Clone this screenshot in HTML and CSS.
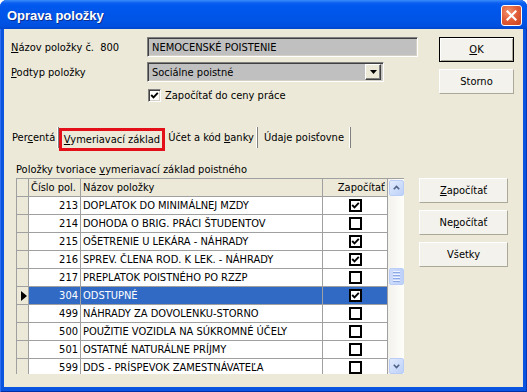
FILE: index.html
```html
<!DOCTYPE html>
<html lang="sk">
<head>
<meta charset="utf-8">
<title>Oprava položky</title>
<link rel="stylesheet" href="styles.css">
</head>
<body>
<div class="window">
  <div class="titlebar">
    <span class="title">Oprava položky</span>
    <span class="close"><svg width="11" height="11" viewBox="0 0 11 11"><path d="M1.5 1.5 L9.5 9.5 M9.5 1.5 L1.5 9.5" stroke="#fff" stroke-width="2.2" stroke-linecap="square"/></svg></span>
  </div>
  <div class="body">
    <div class="top">
      <div class="form">
        <div class="row">
          <span class="lbl"><u>N</u>ázov položky č.&nbsp; 800</span>
          <div class="field name">NEMOCENSKÉ POISTENIE</div>
        </div>
        <div class="row">
          <span class="lbl"><u>P</u>odtyp položky</span>
          <div class="field combo"><span class="ctext">Sociálne poistné</span><span class="dd"><svg width="7" height="4" viewBox="0 0 7 4"><path d="M0 0 H7 L3.5 4 Z" fill="#000"/></svg></span></div>
        </div>
        <div class="chkrow">
          <span class="chk"><svg width="9" height="9" viewBox="0 0 9 9"><polyline points="1.2,4 3.5,6.3 7.8,1.8" fill="none" stroke="#000" stroke-width="1.9"/></svg></span>
          <span class="chklbl">Započítať do ceny práce</span>
        </div>
      </div>
      <div class="btns">
        <div class="btn default"><span><u>O</u>K</span></div>
        <div class="btn"><span>Storno</span></div>
      </div>
    </div>
    <div class="tabs">
      <div class="tab t1"><span>Per<u>c</u>entá</span></div>
      <div class="tab t2 active"><span><u>V</u>ymeriavací základ</span></div>
      <div class="tab t3"><span>Účet a kód <u>b</u>anky</span></div>
      <div class="tab t4"><span>Údaje poisťovne</span></div>
    </div>
    <div class="panel">
      <div class="left">
        <div class="caption">Položky tvoriace <u>v</u>ymeriavací základ poistného</div>
        <div class="grid">
          <div class="rows">
            <div class="r head"><span class="sel"></span><span class="num">Číslo pol.</span><span class="nm">Názov položky</span><span class="ck hk">Započítať</span></div>
            <div class="r"><span class="sel"></span><span class="num">213</span><span class="nm">DOPLATOK DO MINIMÁLNEJ MZDY</span><span class="ck"><i class="box on"></i></span></div>
            <div class="r"><span class="sel"></span><span class="num">214</span><span class="nm">DOHODA O BRIG. PRÁCI ŠTUDENTOV</span><span class="ck"><i class="box"></i></span></div>
            <div class="r"><span class="sel"></span><span class="num">215</span><span class="nm">OŠETRENIE U LEKÁRA - NÁHRADY</span><span class="ck"><i class="box on"></i></span></div>
            <div class="r"><span class="sel"></span><span class="num">216</span><span class="nm">SPREV. ČLENA ROD. K LEK. - NÁHRADY</span><span class="ck"><i class="box on"></i></span></div>
            <div class="r"><span class="sel"></span><span class="num">217</span><span class="nm">PREPLATOK POISTNÉHO PO RZZP</span><span class="ck"><i class="box"></i></span></div>
            <div class="r current"><span class="sel"><svg width="6" height="10" viewBox="0 0 6 10"><path d="M0 0 L6 5 L0 10 Z" fill="#000"/></svg></span><span class="num">304</span><span class="nm">ODSTUPNÉ</span><span class="ck"><i class="box on"></i></span></div>
            <div class="r"><span class="sel"></span><span class="num">499</span><span class="nm">NÁHRADY ZA DOVOLENKU-STORNO</span><span class="ck"><i class="box"></i></span></div>
            <div class="r"><span class="sel"></span><span class="num">500</span><span class="nm">POUŽITIE VOZIDLA NA SÚKROMNÉ ÚČELY</span><span class="ck"><i class="box"></i></span></div>
            <div class="r"><span class="sel"></span><span class="num">501</span><span class="nm">OSTATNÉ NATURÁLNE PRÍJMY</span><span class="ck"><i class="box"></i></span></div>
            <div class="r"><span class="sel"></span><span class="num">599</span><span class="nm">DDS - PRÍSPEVOK ZAMESTNÁVATEĽA</span><span class="ck"><i class="box"></i></span></div>
          </div>
          <div class="sb">
            <div class="sbtn"><svg width="7" height="5" viewBox="0 0 7 5"><polyline points="0.8,4.2 3.5,1.5 6.2,4.2" fill="none" stroke="#4d6185" stroke-width="1.6"/></svg></div>
            <div class="track">
              <div class="thumb"><span></span><span></span><span></span><span></span></div>
            </div>
            <div class="sbtn"><svg width="7" height="5" viewBox="0 0 7 5"><polyline points="0.8,0.8 3.5,3.5 6.2,0.8" fill="none" stroke="#4d6185" stroke-width="1.6"/></svg></div>
          </div>
        </div>
      </div>
      <div class="rbtns">
        <div class="btn wide"><span><u>Z</u>apočítať</span></div>
        <div class="btn wide"><span>Ne<u>p</u>očítať</span></div>
        <div class="btn wide"><span>Všetky</span></div>
      </div>
    </div>
  </div>
</div>
</body>
</html>
```

FILE: styles.css
```css
* { box-sizing: border-box; }
html, body { margin: 0; padding: 0; }
body {
  width: 527px;
  height: 392px;
  overflow: hidden;
  background: #fff;
  font-family: "DejaVu Sans", "Liberation Sans", sans-serif;
  font-stretch: condensed;
  font-size: 11px;
  color: #000;
}
u { text-decoration: underline; text-underline-offset: 1px; }

.window {
  width: 527px;
  height: 392px;
  display: flex;
  flex-direction: column;
  background: #0a55e0;
  border-radius: 7px 7px 0 0;
  padding: 0 4px 5px 4px;
  box-shadow: inset 1px 0 #2d6ff0, inset -1px 0 #0339b8, inset 0 -1px #0030a8;
}

.titlebar {
  height: 29px;
  margin: 0 -4px;
  padding: 0 5px 0 7px;
  display: flex;
  align-items: center;
  justify-content: space-between;
  border-radius: 7px 7px 0 0;
  background: linear-gradient(#3b8cf8 0, #0a5ff0 3px, #0058ee 6px, #0054e6 20px, #0050e0 26px, #0046cc 29px);
}
.title {
  color: #fff;
  font-family: "Liberation Sans", sans-serif;
  font-stretch: normal;
  font-weight: bold;
  font-size: 13px;
  text-shadow: 1px 1px #0b2f8e;
  padding-top: 1px;
}
.close {
  width: 21px;
  height: 21px;
  border: 1px solid #fff;
  border-radius: 3px;
  background: radial-gradient(circle at 35% 30%, #f2926e 0, #e2603a 45%, #c9401c 100%);
  display: flex;
  align-items: center;
  justify-content: center;
  margin-top: 2px;
}

.body {
  flex: 1;
  background: #ece9d8;
  display: flex;
  flex-direction: column;
  padding: 8px 9px 0 7px;
}

.top {
  height: 90px;
  display: flex;
  justify-content: space-between;
}
.row {
  display: flex;
  align-items: center;
  height: 20px;
  margin-bottom: 5px;
}
.lbl { width: 136px; white-space: nowrap; }
.field {
  height: 20px;
  background: #c0c0c0;
  border: 1px solid;
  border-color: #808080 #fff #fff #808080;
  box-shadow: inset 1px 1px #404040, inset -1px -1px #d4d0c8;
  display: flex;
  align-items: center;
  padding-left: 4px;
  white-space: nowrap;
}
.name { width: 271px; }
.combo { width: 237px; justify-content: space-between; padding-right: 2px; }
.dd {
  width: 16px;
  height: 16px;
  background: #ece9d8;
  border: 1px solid;
  border-color: #fff #404040 #404040 #fff;
  box-shadow: inset -1px -1px #808080;
  display: flex;
  align-items: center;
  justify-content: center;
}
.chkrow {
  display: flex;
  align-items: center;
  margin-top: 6px;
  padding-left: 137px;
  height: 14px;
}
.chk {
  width: 13px;
  height: 13px;
  background: #fff;
  border: 1px solid;
  border-color: #808080 #fff #fff #808080;
  box-shadow: inset 1px 1px #404040, inset -1px -1px #d4d0c8;
  display: flex;
  align-items: center;
  justify-content: center;
}
.chklbl { margin-left: 4px; }

.btns {
  display: flex;
  flex-direction: column;
  gap: 7px;
}
.btn {
  width: 75px;
  height: 25px;
  background: #f3f2ec;
  border: 1px solid;
  border-color: #fff #aca899 #aca899 #fff;
  display: flex;
  align-items: center;
  justify-content: center;
  white-space: nowrap;
}
.btn.default {
  border: 1px solid #000;
  box-shadow: inset 1px 1px #fff, inset -1px -1px #aca899;
}
.btn.wide { width: 89px; }

.tabs {
  display: flex;
  height: 21px;
  align-items: flex-start;
}
.tab {
  height: 21px;
  display: flex;
  align-items: center;
  justify-content: center;
  white-space: nowrap;
  border-right: 1px solid #808080;
  box-shadow: inset -1px 0 #fff;
}
.t1 { width: 48px; justify-content: flex-start; padding-left: 1px; }
.t2 {
  width: 106px;
  height: 23px;
  margin-top: 1px;
  border: 3px solid #e3101a;
  box-shadow: none;
  margin-bottom: -3px;
}
.t3 { width: 93px; }
.t4 { width: 93px; }

.panel {
  display: flex;
  padding: 14px 0 0 5px;
}
.caption {
  height: 16px;
  line-height: 16px;
  white-space: nowrap;
}
.grid {
  width: 388px;
  height: 196px;
  display: flex;
  overflow: hidden;
  border-top: 1px solid #a0a0a0;
  border-left: 1px solid #a0a0a0;
  background: #fff;
}
.rows { width: 371px; }
.r {
  display: grid;
  grid-template-columns: 12px 52px 242px 65px;
  height: 18px;
}
.r > span {
  border-right: 1px solid #a0a0a0;
  border-bottom: 1px solid #a0a0a0;
  display: flex;
  align-items: center;
  white-space: nowrap;
  overflow: hidden;
}
.sel { background: #ece9d8; justify-content: center; padding-left: 2px; }
.num { justify-content: flex-end; padding-right: 2px; }
.nm { padding-left: 2px; }
.ck { justify-content: center; }
.head > span { background: #ece9d8; }
.head .num { justify-content: flex-start; padding-left: 2px; }
.head .hk { justify-content: flex-end; padding-right: 2px; }
.current .num, .current .nm, .current .ck { background: #316ac5; color: #fff; }

.box {
  display: block;
  width: 13px;
  height: 13px;
  border: 2px solid #000;
  background: #fff;
}
.box.on {
  background: #fff url("data:image/svg+xml;utf8,<svg xmlns='http://www.w3.org/2000/svg' width='9' height='9' viewBox='0 0 9 9'><polyline points='1.2,4 3.5,6.3 7.8,1.8' fill='none' stroke='black' stroke-width='1.9'/></svg>") center / 9px 9px no-repeat;
}

.sb {
  width: 16px;
  display: flex;
  flex-direction: column;
  background: linear-gradient(90deg, #f3f1ec, #fefefb);
  padding: 1px 0 0 1px;
}
.sbtn {
  width: 15px;
  height: 16px;
  border: 1px solid #b9cdf7;
  border-radius: 2px;
  background: linear-gradient(135deg, #e2ebfd, #bcd0f8);
  display: flex;
  align-items: center;
  justify-content: center;
}
.track {
  height: 163px;
  padding-top: 72px;
}
.thumb {
  width: 15px;
  height: 17px;
  border: 1px solid #b9cdf7;
  border-radius: 2px;
  background: linear-gradient(90deg, #cddbfb, #bdd0f8);
  display: flex;
  flex-direction: column;
  align-items: center;
  justify-content: center;
  gap: 1px;
}
.thumb span {
  display: block;
  width: 7px;
  height: 1px;
  background: #eef3fe;
  box-shadow: 0 1px #8ca8e6;
  margin-bottom: 1px;
}

.rbtns {
  display: flex;
  flex-direction: column;
  gap: 7px;
  padding-top: 16px;
  margin-left: 15px;
}
```
